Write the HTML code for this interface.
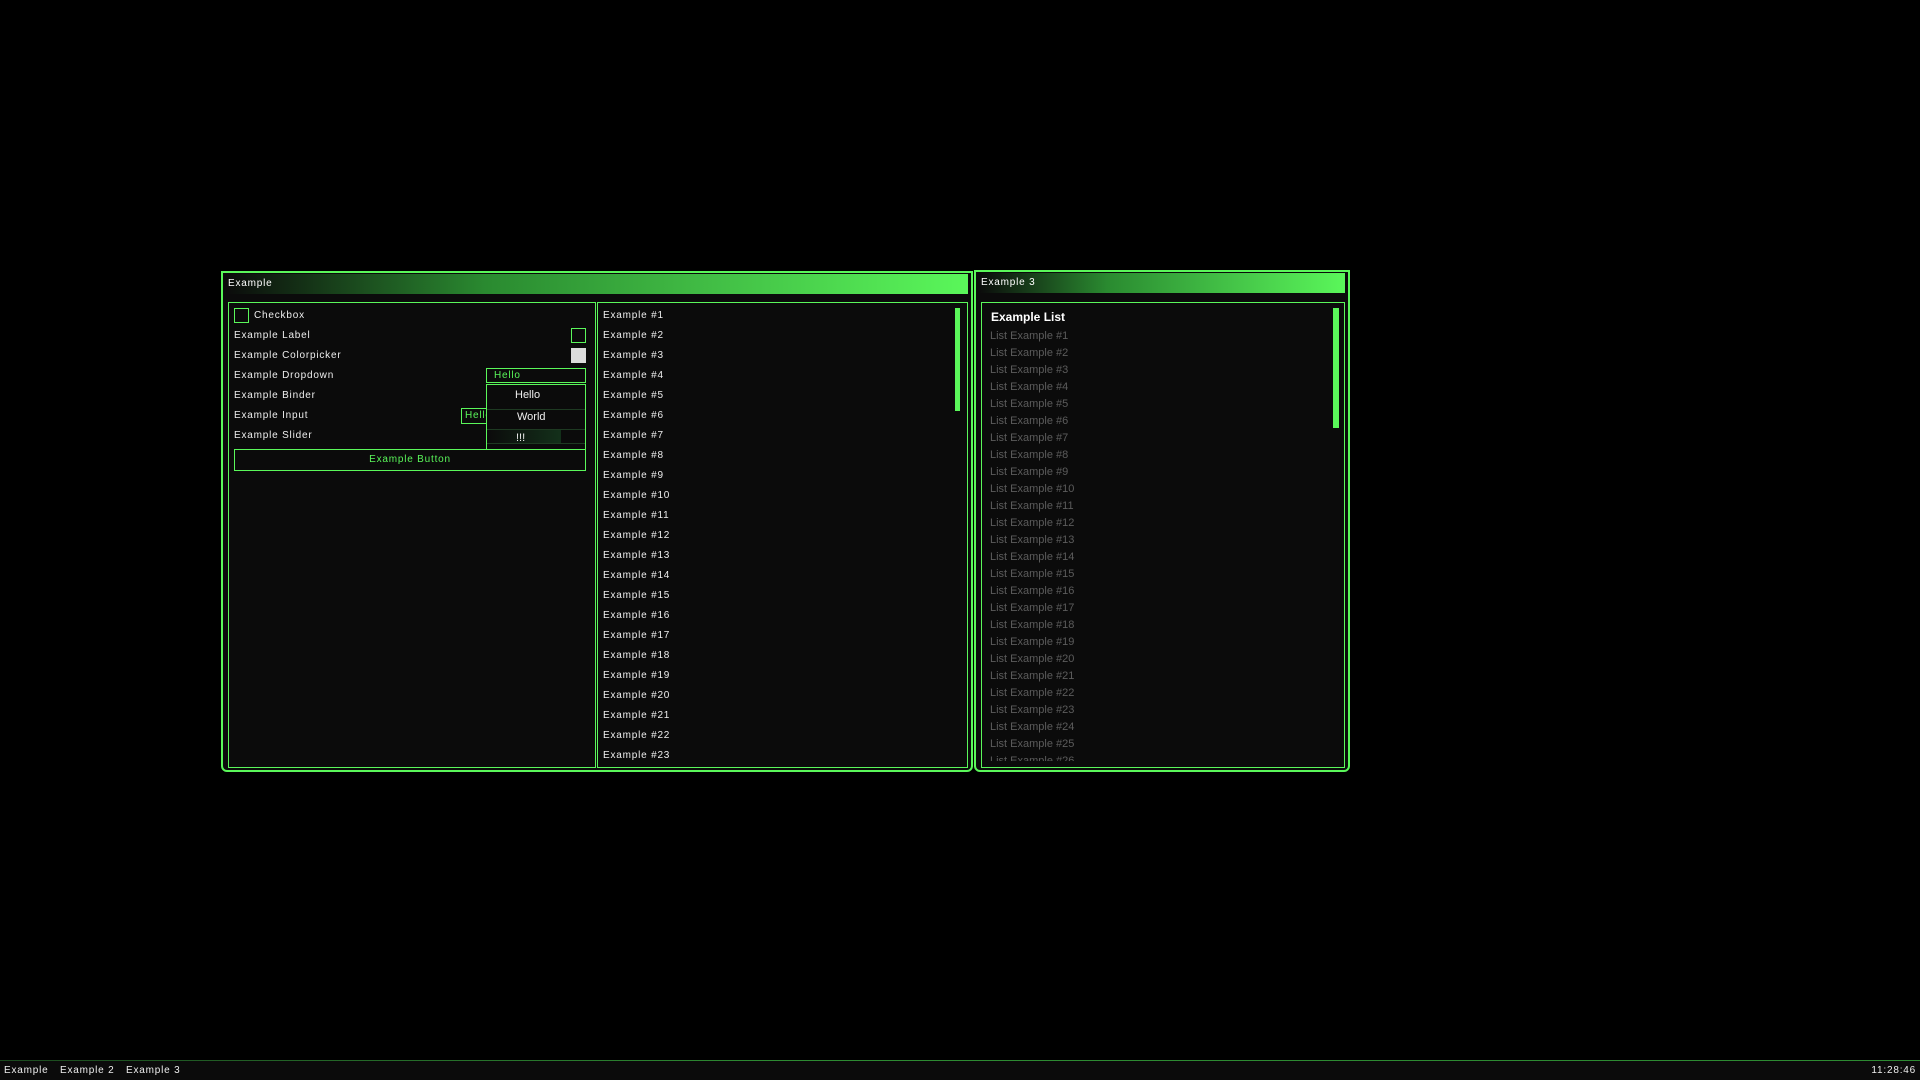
<!DOCTYPE html>
<html><head><meta charset="utf-8"><style>
*{margin:0;padding:0;box-sizing:border-box}
body{width:1920px;height:1080px;background:#000;position:relative;overflow:hidden;font-family:"Liberation Sans","DejaVu Sans",sans-serif;font-size:10px;color:#eee;letter-spacing:0.8px}
.abs{position:absolute}
.win{position:absolute;border:2px solid #5af75a;background:#0b0b0b;border-radius:0 0 6px 6px}
.title{position:absolute;left:3px;right:3px;top:1px;height:20px;background:linear-gradient(90deg,#0b0b0b 0%,#2a8a30 35%,#45c548 70%,#5af75a 100%);color:#fff;padding:4px 0 0 2px;font-size:10px}
.panel{position:absolute;border:1px solid #5af75a;background:#0b0b0b;overflow:hidden}
.row{position:absolute;left:5px;white-space:nowrap;margin-top:1px}
.g{color:#5af75a}
.box{position:absolute;border:1px solid #5af75a}
.li{position:absolute;left:8px;color:#5c5c5c;font-size:11px;letter-spacing:0}
</style></head><body>

<div class="win" style="left:221px;top:271px;width:752px;height:501px">
 <div class="title">Example</div>
 <div class="panel" style="left:5px;top:29px;width:368px;height:466px">
  <div class="box" style="left:5px;top:5px;width:15px;height:15px"></div>
  <div class="row" style="left:25px;top:6px">Checkbox</div>
  <div class="row" style="top:26px">Example Label</div>
  <div class="row" style="top:46px">Example Colorpicker</div>
  <div class="row" style="top:66px">Example Dropdown</div>
  <div class="row" style="top:86px">Example Binder</div>
  <div class="row" style="top:106px">Example Input</div>
  <div class="row" style="top:126px">Example Slider</div>
  <div class="box" style="left:342px;top:25px;width:15px;height:15px"></div>
  <div class="abs" style="left:342px;top:45px;width:15px;height:15px;background:#dcdcdc"></div>
  <div class="box" style="left:303px;top:85px;width:54px;height:16px;border-color:#1e3a22;color:#1e3a22;font-size:10px;padding:1px 0 0 3px">MOUSE5</div>
  <div class="box g" style="left:232px;top:105px;width:60px;height:16px;padding:1px 0 0 3px;overflow:hidden;white-space:nowrap">Hello <span style="color:#1e4a24">World</span></div>
  <div class="box g" style="left:257px;top:65px;width:100px;height:15px;padding:1px 0 0 7px">Hello</div>
  <div class="abs" style="left:257px;top:81px;width:100px;height:66px;background:#0b0b0b;border:1px solid #5af75a;border-bottom:none">
   <div class="abs" style="left:0;right:0;top:24px;border-top:1px solid #1e3a22"></div>
   <div class="abs" style="left:0;right:0;top:44px;border-top:1px solid #1e3a22"></div>
   <div class="abs" style="left:1px;top:45px;width:73px;height:14px;background:linear-gradient(90deg,#0b0b0b,#13301a)"></div>
   <div class="abs" style="left:0;right:0;top:58px;border-top:1px solid #1e3a22"></div>
   <div class="abs" style="left:28px;top:4px;font-size:11px;letter-spacing:0">Hello</div>
   <div class="abs" style="left:30px;top:26px;font-size:11px;letter-spacing:0">World</div>
   <div class="abs" style="left:29px;top:47px;font-size:11px;letter-spacing:0">!!!</div>
  </div>
  <div class="box g" style="left:5px;top:146px;width:352px;height:22px;text-align:center;padding-top:4px">Example Button</div>
 </div>
 <div class="panel" style="left:374px;top:29px;width:371px;height:466px">
  <div class="abs" style="left:357px;top:5px;width:5px;height:103px;background:#5af75a"></div>
  <div class="row" style="top:6px">Example #1</div><div class="row" style="top:26px">Example #2</div><div class="row" style="top:46px">Example #3</div><div class="row" style="top:66px">Example #4</div><div class="row" style="top:86px">Example #5</div><div class="row" style="top:106px">Example #6</div><div class="row" style="top:126px">Example #7</div><div class="row" style="top:146px">Example #8</div><div class="row" style="top:166px">Example #9</div><div class="row" style="top:186px">Example #10</div><div class="row" style="top:206px">Example #11</div><div class="row" style="top:226px">Example #12</div><div class="row" style="top:246px">Example #13</div><div class="row" style="top:266px">Example #14</div><div class="row" style="top:286px">Example #15</div><div class="row" style="top:306px">Example #16</div><div class="row" style="top:326px">Example #17</div><div class="row" style="top:346px">Example #18</div><div class="row" style="top:366px">Example #19</div><div class="row" style="top:386px">Example #20</div><div class="row" style="top:406px">Example #21</div><div class="row" style="top:426px">Example #22</div><div class="row" style="top:446px">Example #23</div>
 </div>
</div>

<div class="win" style="left:974px;top:270px;width:376px;height:502px">
 <div class="title">Example 3</div>
 <div class="panel" style="left:5px;top:30px;width:364px;height:466px">
  <div class="abs" style="left:351px;top:5px;width:6px;height:120px;background:#5af75a"></div>
  <div class="abs" style="left:0;top:0;width:340px;height:458px;overflow:hidden">
   <div class="abs" style="left:9px;top:7px;font-weight:bold;font-size:12px;letter-spacing:0;color:#fff">Example List</div>
   <div class="li" style="top:27px">List Example #1</div><div class="li" style="top:44px">List Example #2</div><div class="li" style="top:61px">List Example #3</div><div class="li" style="top:78px">List Example #4</div><div class="li" style="top:95px">List Example #5</div><div class="li" style="top:112px">List Example #6</div><div class="li" style="top:129px">List Example #7</div><div class="li" style="top:146px">List Example #8</div><div class="li" style="top:163px">List Example #9</div><div class="li" style="top:180px">List Example #10</div><div class="li" style="top:197px">List Example #11</div><div class="li" style="top:214px">List Example #12</div><div class="li" style="top:231px">List Example #13</div><div class="li" style="top:248px">List Example #14</div><div class="li" style="top:265px">List Example #15</div><div class="li" style="top:282px">List Example #16</div><div class="li" style="top:299px">List Example #17</div><div class="li" style="top:316px">List Example #18</div><div class="li" style="top:333px">List Example #19</div><div class="li" style="top:350px">List Example #20</div><div class="li" style="top:367px">List Example #21</div><div class="li" style="top:384px">List Example #22</div><div class="li" style="top:401px">List Example #23</div><div class="li" style="top:418px">List Example #24</div><div class="li" style="top:435px">List Example #25</div><div class="li" style="top:452px">List Example #26</div>
  </div>
 </div>
</div>

<div class="abs" style="left:0;top:1060px;width:1920px;height:1px;background:linear-gradient(90deg,#1c4a1f,#2d8a32 40%,#2d8a32)"></div>
<div class="abs" style="left:0;top:1061px;width:1920px;height:19px;background:#0b0b0b"></div>
<div class="abs" style="left:4px;top:1065px">Example</div>
<div class="abs" style="left:60px;top:1065px">Example 2</div>
<div class="abs" style="left:126px;top:1065px">Example 3</div>
<div class="abs" style="right:4px;top:1065px">11:28:46</div>
</body></html>
